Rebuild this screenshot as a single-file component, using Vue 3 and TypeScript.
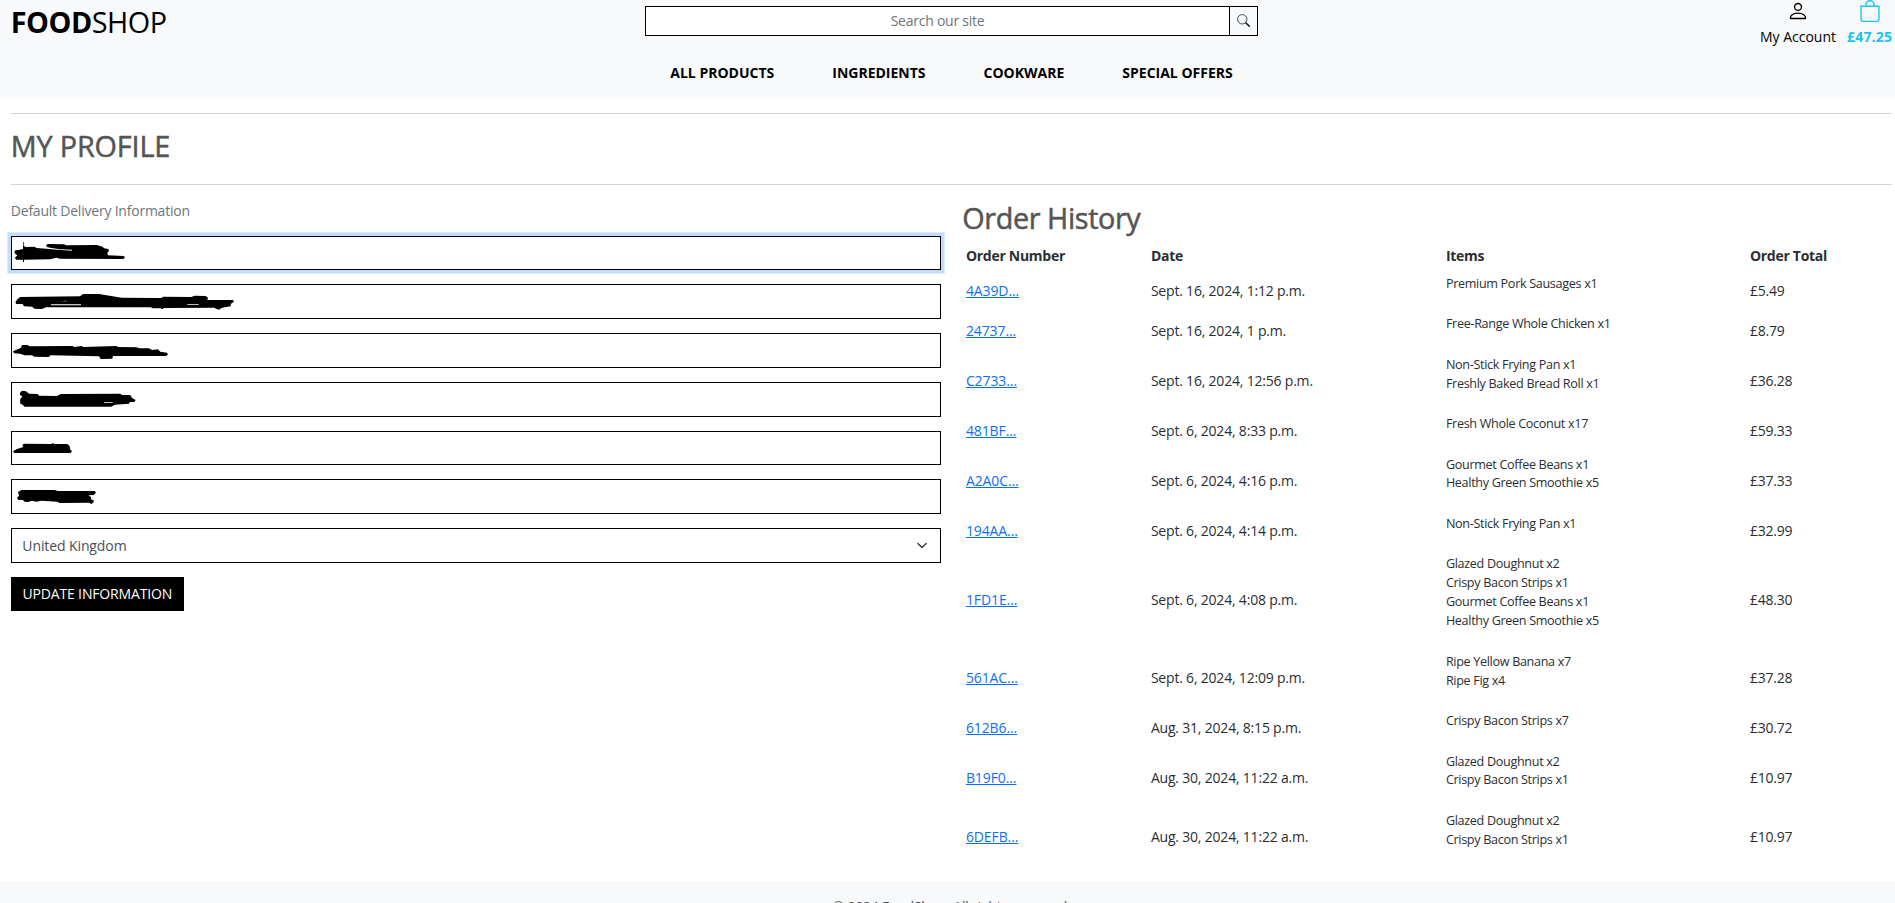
<script setup lang="ts">
interface Order { number: string; date: string; items: string[]; total: string }
interface Field { label: string; viewBox: string; mark: string }

const navLinks = ['All Products', 'Ingredients', 'Cookware', 'Special Offers']

const fields: Field[] = [
  { label: 'Phone Number', viewBox: '33 138 900 105', mark: 'M43 184 Q47 179 56 180 L69 177 V156 H71 V168 L78 171 L103 170 L110 174 L148 177 L172 179 L215 182 L216 179 L180 178 L150 173 L139 170 L140 163 L150 162 L192 163 L198 166 L290 165 L308 170 L312 175 L325 177 L327 183 L322 188 L324 196 L371 198 L375 202 L370 207 L180 206 L169 203 L150 208 L72 209 V216 H69 V209 L48 209 L45 203 L52 196 L45 191 Z' },
  { label: 'Street Address 1', viewBox: '33 282 900 105', mark: 'M46 337 Q49 327 61 321 L240 319 L249 312 L297 312 L365 323 L483 324 L490 320 L574 321 L584 317 L617 318 L624 323 L622 330 L699 330 L702 335 L693 341 L692 349 L666 353 L657 359 L648 356 L642 353 L491 354 L487 358 L482 355 L459 355 L452 352 L138 352 L126 357 L103 356 L97 350 L72 349 L68 342 L49 342 Z M153 343 H243 V346 H153 Z M562 343 H596 V345 H562 Z M180 334 H200 V332 Z' },
  { label: 'Street Address 2', viewBox: '33 429 900 105', mark: 'M39 484 L63 473 L66 465 L83 465 L89 469 L217 468 L223 471 L245 468 L250 471 L349 468 L354 471 L410 472 L417 475 L447 475 L456 480 L474 478 L481 485 L501 488 L504 493 L499 498 L339 498 L337 506 L302 507 L297 499 L152 496 L146 501 L103 500 L96 496 L73 496 L61 491 L42 490 Z' },
  { label: 'Town or City', viewBox: '33 576 900 105', mark: 'M60 608 L66 602 L78 604 L87 611 L113 612 L117 617 L170 618 L183 612 L360 611 L367 615 L391 615 L396 624 L407 630 L403 636 L390 636 L387 641 L345 644 L333 650 L74 650 L68 644 L60 640 L61 627 L67 619 L60 615 Z M312 637 H338 V639 H312 Z' },
  { label: 'County', viewBox: '33 63 900 105', mark: 'M39 124 L51 117 L70 111 L67 105 L72 101 L154 102 L158 99 L162 102 L202 102 L209 109 L211 119 L216 123 L212 129 L43 129 Z' },
  { label: 'Postal Code', viewBox: '33 207 900 105', mark: 'M54 246 L64 240 L164 240 L174 243 L284 243 L288 248 L281 255 L265 256 L273 261 L273 268 L281 271 L281 277 L274 282 L267 278 L178 279 L172 275 L148 274 L124 272 L109 275 L96 272 L84 276 L73 275 L69 270 L55 270 L51 264 L57 257 Z' },
]

const orders: Order[] = [
  { number: '4A39D...', date: 'Sept. 16, 2024, 1:12 p.m.', items: ['Premium Pork Sausages x1'], total: '£5.49' },
  { number: '24737...', date: 'Sept. 16, 2024, 1 p.m.', items: ['Free-Range Whole Chicken x1'], total: '£8.79' },
  { number: 'C2733...', date: 'Sept. 16, 2024, 12:56 p.m.', items: ['Non-Stick Frying Pan x1', 'Freshly Baked Bread Roll x1'], total: '£36.28' },
  { number: '481BF...', date: 'Sept. 6, 2024, 8:33 p.m.', items: ['Fresh Whole Coconut x17'], total: '£59.33' },
  { number: 'A2A0C...', date: 'Sept. 6, 2024, 4:16 p.m.', items: ['Gourmet Coffee Beans x1', 'Healthy Green Smoothie x5'], total: '£37.33' },
  { number: '194AA...', date: 'Sept. 6, 2024, 4:14 p.m.', items: ['Non-Stick Frying Pan x1'], total: '£32.99' },
  { number: '1FD1E...', date: 'Sept. 6, 2024, 4:08 p.m.', items: ['Glazed Doughnut x2', 'Crispy Bacon Strips x1', 'Gourmet Coffee Beans x1', 'Healthy Green Smoothie x5'], total: '£48.30' },
  { number: '561AC...', date: 'Sept. 6, 2024, 12:09 p.m.', items: ['Ripe Yellow Banana x7', 'Ripe Fig x4'], total: '£37.28' },
  { number: '612B6...', date: 'Aug. 31, 2024, 8:15 p.m.', items: ['Crispy Bacon Strips x7'], total: '£30.72' },
  { number: 'B19F0...', date: 'Aug. 30, 2024, 11:22 a.m.', items: ['Glazed Doughnut x2', 'Crispy Bacon Strips x1'], total: '£10.97' },
  { number: '6DEFB...', date: 'Aug. 30, 2024, 11:22 a.m.', items: ['Glazed Doughnut x2', 'Crispy Bacon Strips x1'], total: '£10.97' },
]
</script>

<template>
  <div class="page">
    <header class="top">
      <div class="bar">
        <a class="brand"><strong>FOOD</strong>SHOP</a>
        <form class="search" @submit.prevent>
          <input type="text" placeholder="Search our site" aria-label="Search" />
          <button type="submit" aria-label="Submit search">
            <svg viewBox="0 0 16 16" width="13" height="13" fill="none" stroke="currentColor"><circle cx="6.5" cy="6.5" r="5.8" stroke-width="1" /><path d="m10.8 10.8 4.2 4.2" stroke-width="2" stroke-linecap="round" /></svg>
          </button>
        </form>
        <div class="tools">
          <a class="tool account">
            <svg viewBox="0 0 16 16" width="22" height="22" fill="currentColor"><path d="M8 8a3 3 0 1 0 0-6 3 3 0 0 0 0 6m2-3a2 2 0 1 1-4 0 2 2 0 0 1 4 0m4 8c0 1-1 1-1 1H3s-1 0-1-1 1-4 6-4 6 3 6 4m-1-.004c-.001-.246-.154-.986-.832-1.664C11.516 10.68 10.289 10 8 10s-3.516.68-4.168 1.332c-.678.678-.83 1.418-.832 1.664z" /></svg>
            <span>My Account</span>
          </a>
          <a class="tool bag">
            <svg viewBox="0 0 16 16" width="22" height="22" fill="currentColor"><path d="M8 1a2.5 2.5 0 0 1 2.5 2.5V4h-5v-.5A2.5 2.5 0 0 1 8 1m3.5 3v-.5a3.5 3.5 0 1 0-7 0V4H1v10a2 2 0 0 0 2 2h10a2 2 0 0 0 2-2V4zM2 5h12v9a1 1 0 0 1-1 1H3a1 1 0 0 1-1-1z" /></svg>
            <span>£47.25</span>
          </a>
        </div>
      </div>
      <nav class="nav"><a v-for="l in navLinks" :key="l">{{ l }}</a></nav>
    </header>

    <main class="content">
      <hr />
      <h2 class="title">My Profile</h2>
      <hr />
      <div class="columns">
        <section class="delivery">
          <p class="lead">Default Delivery Information</p>
          <div v-for="(f, i) in fields" :key="f.label" class="field" :class="{ focused: i === 0 }">
            <input type="text" :aria-label="f.label" />
            <svg class="scribble" :viewBox="f.viewBox" width="300" height="35"><path :d="f.mark" fill-rule="evenodd" /></svg>
          </div>
          <div class="field select">
            <span>United Kingdom</span>
            <svg viewBox="0 0 16 16" width="14" height="11"><path d="m2 5 6 6 6-6" fill="none" stroke="#343a40" stroke-width="2" stroke-linecap="round" stroke-linejoin="round" /></svg>
          </div>
          <button class="update" type="button">Update Information</button>
        </section>
        <section class="history">
          <h2>Order History</h2>
          <table>
            <colgroup><col class="c-number" /><col class="c-date" /><col class="c-items" /><col /></colgroup>
            <thead><tr><th>Order Number</th><th>Date</th><th>Items</th><th>Order Total</th></tr></thead>
            <tbody>
              <tr v-for="o in orders" :key="o.number">
                <td><a class="link">{{ o.number }}</a></td>
                <td>{{ o.date }}</td>
                <td class="items"><ul><li v-for="item in o.items" :key="item">{{ item }}</li></ul></td>
                <td>{{ o.total }}</td>
              </tr>
            </tbody>
          </table>
        </section>
      </div>
    </main>
    <footer class="foot">© 2024 FoodShop. All rights reserved.</footer>
  </div>
</template>

<style>
html, body { height: 100%; overflow: hidden; }
</style>

<style scoped>
* { box-sizing: border-box; }
.page { width: 1903px; height: 903px; overflow: hidden; background: #fff; color: #2a2e32; font: 400 14px/21.6px "Open Sans", "Noto Sans", sans-serif; }
.top { height: 98px; background: #f8f9fb; color: #000; }
.bar { height: 55px; padding: 0 10.8px; display: grid; grid-template-columns: 1fr 613px 1fr; align-items: start; }
.brand { font-size: 28.8px; line-height: 43px; letter-spacing: -0.5px; }
.search { display: flex; height: 30px; margin-top: 6px; border: 1px solid #000; }
.search input { flex: 1; min-width: 0; padding: 0; border: 0; background: #fff; text-align: center; font: inherit; letter-spacing: -0.25px; outline: 0; }
.search input::placeholder { color: #6c757d; opacity: 1; }
.search button { width: 28px; padding: 0 1px 2px 0; border: 0; border-left: 1px solid #000; background: transparent; display: grid; place-items: center; color: #212529; }
.tools { display: flex; justify-content: flex-end; gap: 11px; }
.tool { display: flex; flex-direction: column; align-items: center; white-space: nowrap; }
.account svg { margin-bottom: 4px; }
.bag { color: #17c6f0; font-weight: 700; letter-spacing: 0.2px; }
.bag svg { margin-bottom: 4px; }
.nav { display: flex; justify-content: center; gap: 58px; padding-top: 7px; font-weight: 700; text-transform: uppercase; }
.content { padding: 15px 10.8px 0; }
hr { height: 1px; margin: 0; border: 0; background: #d3d4d5; }
h2 { margin: 0; font-size: 28.8px; font-weight: 500; line-height: 34.6px; color: #555; letter-spacing: -0.4px; -webkit-text-stroke: 0.5px #555; }
.title { margin: 15px 0 20.4px; text-transform: uppercase; letter-spacing: -0.15px; }
.columns { display: grid; grid-template-columns: 1fr 1fr; column-gap: 21.6px; padding-top: 15.6px; }
.lead { margin: 0 0 15.1px; line-height: 20px; color: #6c757d; letter-spacing: -0.22px; }
.field { position: relative; height: 34.6px; margin-bottom: 14.17px; }
.field input { width: 100%; height: 100%; border: 1px solid #000; border-radius: 0; outline: 0; display: block; }
.focused input { box-shadow: 0 0 0 3.6px #c2dbfe; }
.scribble { position: absolute; left: 0; top: 0; }
.select { border: 1px solid #000; padding: 1px 11px 0 10.5px; display: flex; align-items: center; justify-content: space-between; color: #495057; letter-spacing: -0.1px; }
.update { display: block; width: 173px; height: 34.2px; padding: 0; border: 0; background: #000; color: #fff; font: inherit; letter-spacing: -0.15px; text-transform: uppercase; white-space: nowrap; }
.history h2 { margin: 0 0 7.2px; }
table { width: 100%; border-collapse: collapse; table-layout: fixed; letter-spacing: -0.2px; }
.c-number { width: 185px; }
.c-date { width: 295px; }
.c-items { width: 304px; }
th, td { padding: 2.6px 3.6px 4.6px; text-align: left; vertical-align: middle; }
.items { padding: 3.6px; }
th { font-weight: 700; letter-spacing: -0.28px; }
.link { color: #0d6efd; text-decoration: underline; letter-spacing: -0.1px; }
ul { list-style: none; margin: 0 0 14.4px; padding: 0; font-size: 12.6px; line-height: 18.9px; letter-spacing: -0.32px; }
.foot { margin-top: 13.4px; height: 60px; padding-top: 14.4px; background: #f8f9fb; color: #4a4f54; text-align: center; letter-spacing: -0.2px; }
</style>
